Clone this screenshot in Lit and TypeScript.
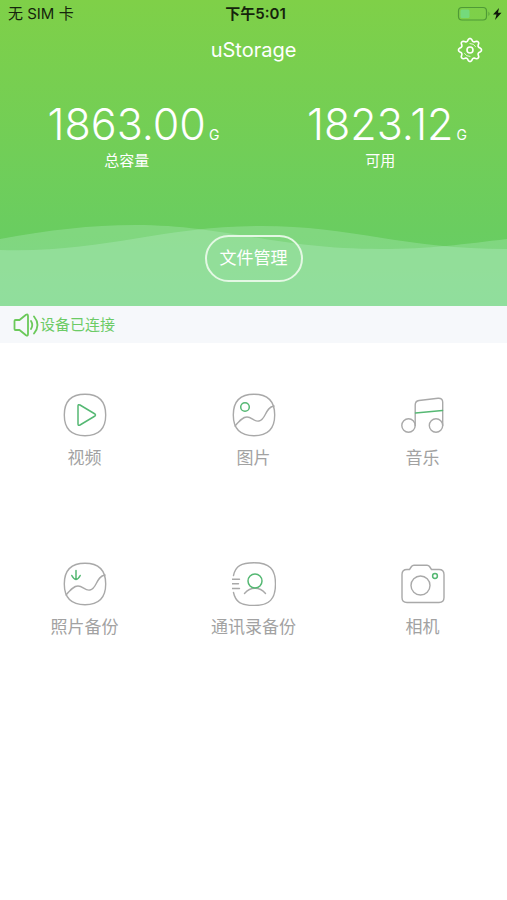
import { LitElement, html, css, svg } from "lit";
import type { TemplateResult } from "lit";
import { customElement, property } from "lit/decorators.js";

interface Tile {
  label: string;
  icon: TemplateResult;
}

const frame = svg`<path d="M22 1.300C36 1.300 42.700 8 42.700 22S36 42.700 22 42.700 1.300 36 1.300 22 8 1.300 22 1.300Z"/>`;
const hills = svg`<path d="M3 33C8 27 11 24 15 24C20 24 22 29 27 28C34 27 33 14 42 13"/>`;

const tiles: Tile[] = [
  {
    label: "视频",
    icon: svg`${frame}<path class="accent" d="M15 13V31Q15 33 17 32L32 23Q33 22 32 21L17 12Q15 11 15 13Z"/>`,
  },
  {
    label: "图片",
    icon: svg`${frame}${hills}<circle class="accent" cx="13" cy="14" r="4.3"/>`,
  },
  {
    label: "音乐",
    icon: svg`<circle cx="7.500" cy="32.500" r="6.700"/><circle cx="35" cy="32.500" r="6.700"/>
      <path d="M14.200 32.500V12Q14.200 8 18 7.500L37 5.300Q41.700 5 41.700 9V32.500"/>
      <path class="accent" d="M14.500 20L41.500 17.500"/>`,
  },
  {
    label: "照片备份",
    icon: svg`${frame}${hills}<path class="accent" d="M13 8.500V17.500M8.800 13.500Q10.500 17 13 17.500Q15.500 17 17.200 13.500"/>`,
  },
  {
    label: "通讯录备份",
    icon: svg`<path d="M1.500 13.500C3.500 4 9 0.800 22 0.800C37.500 0.800 43.500 7 43.500 22S37.500 43.500 22 43.500C9 43.500 3.500 40 1.500 30.500"/>
      <path d="M0 17.200H7.500M0 21.800H6.500M0 26.500H7.500"/>
      <path d="M12.500 31.500Q17 26.300 23 26.300T33.500 31.500"/>
      <circle class="accent" cx="23" cy="19" r="7"/>`,
  },
  {
    label: "相机",
    icon: svg`<path d="M6 7.500H8.500L10.500 4.500Q11.300 3.300 13 3.300H26Q27.700 3.300 28.500 4.500L30.500 7.500H38Q43 7.500 43 12.500V35.500Q43 40.500 38 40.500H6Q1 40.500 1 35.500V12.500Q1 7.500 6 7.500Z"/>
      <circle cx="19.500" cy="23.500" r="9.500"/><circle class="accent" cx="34" cy="14" r="2.400"/>`,
  },
];

/** Outline of an eight-lobed cog centred in a 26 unit box. */
function cogPath(): string {
  const points: string[] = [];
  const steps = 96;
  for (let i = 0; i < steps; i++) {
    const angle = (i / steps) * Math.PI * 2;
    const wave = Math.cos(angle * 8);
    const radius = 10.2 + 1.3 * Math.sign(wave) * Math.pow(Math.abs(wave), 0.7);
    points.push(
      `${(13 + radius * Math.cos(angle)).toFixed(2)} ${(13 + radius * Math.sin(angle)).toFixed(2)}`
    );
  }
  return `M${points.join("L")}Z`;
}

@customElement("status-bar")
class StatusBar extends LitElement {
  static styles = css`
    :host {
      display: grid;
      grid-template-columns: 1fr auto 1fr;
      align-items: center;
      height: 28px;
      padding: 0 4px 0 8px;
      color: #15240c;
      font-size: 15px;
      line-height: 20px;
    }
    .time {
      font-weight: 600;
    }
    .power {
      justify-self: end;
      display: block;
      width: 46px;
      height: 16px;
    }
  `;

  render() {
    return html`
      <span>无 SIM 卡</span>
      <span class="time">下午5:01</span>
      <svg class="power" viewBox="0 0 46 16" role="img" aria-label="正在充电">
        <rect x="1.500" y="1.500" width="28" height="12.500" rx="3.500" fill="none" stroke="#4f9a36" stroke-width="1.200" />
        <rect x="3.500" y="3.500" width="9" height="8.500" rx="1.500" fill="#74da7c" />
        <path d="M31.500 5.500Q33.500 8 31.500 10Z" fill="#4f9a36" />
        <path d="M42 2L36 8.500H39.500L38 14L44.500 6.800H41Z" fill="#10180a" />
      </svg>
    `;
  }
}

@customElement("capacity-figure")
class CapacityFigure extends LitElement {
  @property() value = "";
  @property() label = "";

  static styles = css`
    :host {
      display: block;
      color: #fff;
      text-align: center;
    }
    .amount {
      display: grid;
      grid-template-columns: 1fr auto 1fr;
      align-items: baseline;
      column-gap: 3px;
    }
    .number {
      grid-column: 2;
      font-size: 43px;
      line-height: 52px;
      font-weight: 350;
    }
    .unit {
      text-align: left;
      font-size: 14px;
      line-height: 20px;
    }
    .label {
      font-size: 15px;
      line-height: 22px;
    }
  `;

  render() {
    return html`
      <div class="amount">
        <span class="number">${this.value}</span>
        <span class="unit">G</span>
      </div>
      <div class="label">${this.label}</div>
    `;
  }
}

@customElement("app-root")
class AppRoot extends LitElement {
  static styles = css`
    :host {
      display: block;
      min-height: 100vh;
      background: #fff;
      font-family: Inter, "Noto Sans CJK SC", sans-serif;
    }
    button {
      margin: 0;
      padding: 0;
      border: 0;
      background: none;
      font: inherit;
      cursor: pointer;
    }
    svg {
      display: block;
      fill: none;
      stroke-linecap: round;
      stroke-linejoin: round;
    }
    .hero {
      position: relative;
      background: linear-gradient(#7fd048, #6acd60 75%, #66cc6c);
    }
    .waves {
      position: absolute;
      left: 0;
      bottom: 0;
      width: 100%;
      height: 84px;
      fill: rgba(205, 246, 225, 0.24);
    }
    .content {
      position: relative;
      display: flex;
      flex-direction: column;
      padding-bottom: 24px;
    }
    .bar {
      display: grid;
      grid-template-columns: 1fr auto 1fr;
      align-items: center;
      height: 44px;
      padding: 0 24px;
    }
    .title {
      grid-column: 2;
      margin: 0;
      color: #fff;
      font-size: 20px;
      line-height: 28px;
      font-weight: 400;
    }
    .settings {
      justify-self: end;
    }
    .cog {
      width: 26px;
      height: 26px;
      stroke: #fff;
      stroke-width: 1.6;
    }
    .figures {
      display: grid;
      grid-template-columns: 1fr 1fr;
      padding-top: 26px;
    }
    .manage {
      align-self: center;
      margin-top: 63px;
      padding: 0 13px;
      border: 2px solid #e4f8e4;
      border-radius: 24px;
      color: #fff;
      font-size: 17px;
      line-height: 43px;
    }
    .notice {
      display: flex;
      align-items: center;
      gap: 1px;
      height: 37px;
      padding-left: 13px;
      background: #f6f8fb;
      color: #6ccb66;
      font-size: 15px;
      line-height: 22px;
    }
    .speaker {
      width: 26px;
      height: 26px;
      stroke: #6bc95a;
      stroke-width: 1.8;
    }
    .tiles {
      display: grid;
      grid-template-columns: repeat(3, 1fr);
    }
    .tile {
      display: flex;
      flex-direction: column;
      align-items: center;
      gap: 8px;
      aspect-ratio: 1;
      padding-top: 50px;
      color: #a2a2a2;
      font-size: 17px;
      line-height: 26px;
    }
    .icon {
      width: 44px;
      height: 44px;
      stroke: #a9a9a9;
      stroke-width: 1.4;
    }
    .accent {
      stroke: #55b873;
      stroke-width: 1.5;
    }
  `;

  render() {
    return html`
      <header class="hero">
        <svg class="waves" viewBox="0 0 507 84" preserveAspectRatio="none" aria-hidden="true">
          <path d="M0 17C50 8 90 3 135 3C225 3 275 27 380 27C430 27 465 22 507 17V84H0Z" />
          <path d="M0 28C105 31 160 4 262 4C350 4 405 27 507 27V84H0Z" />
        </svg>
        <div class="content">
          <status-bar></status-bar>
          <div class="bar">
            <h1 class="title">uStorage</h1>
            <button class="settings" aria-label="设置">
              <svg class="cog" viewBox="0 0 26 26">
                <path d=${cogPath()} />
                <circle cx="13" cy="13" r="3" />
                <path d="M13 6.500Q17 6.500 18.500 9.500M13 19.500Q9 19.500 7.500 16.500" stroke-width="0.800" />
              </svg>
            </button>
          </div>
          <div class="figures">
            <capacity-figure value="1863.00" label="总容量"></capacity-figure>
            <capacity-figure value="1823.12" label="可用"></capacity-figure>
          </div>
          <button class="manage">文件管理</button>
        </div>
      </header>
      <div class="notice" role="status">
        <svg class="speaker" viewBox="0 0 26 26" aria-hidden="true">
          <path d="M2.500 8H6.500L13 2.700Q15 1.500 15 4V22Q15 24.500 13 23.300L6.500 18H2.500Q1.500 18 1.500 17V9Q1.500 8 2.500 8Z" />
          <path d="M18 9Q20.500 13 18 17M21 4.500Q28 13 21 21.500" />
        </svg>
        <span>设备已连接</span>
      </div>
      <main class="tiles">
        ${tiles.map(
          (tile) => html`
            <button class="tile">
              <svg class="icon" viewBox="0 0 44 44" aria-hidden="true">${tile.icon}</svg>
              <span>${tile.label}</span>
            </button>
          `
        )}
      </main>
    `;
  }
}
